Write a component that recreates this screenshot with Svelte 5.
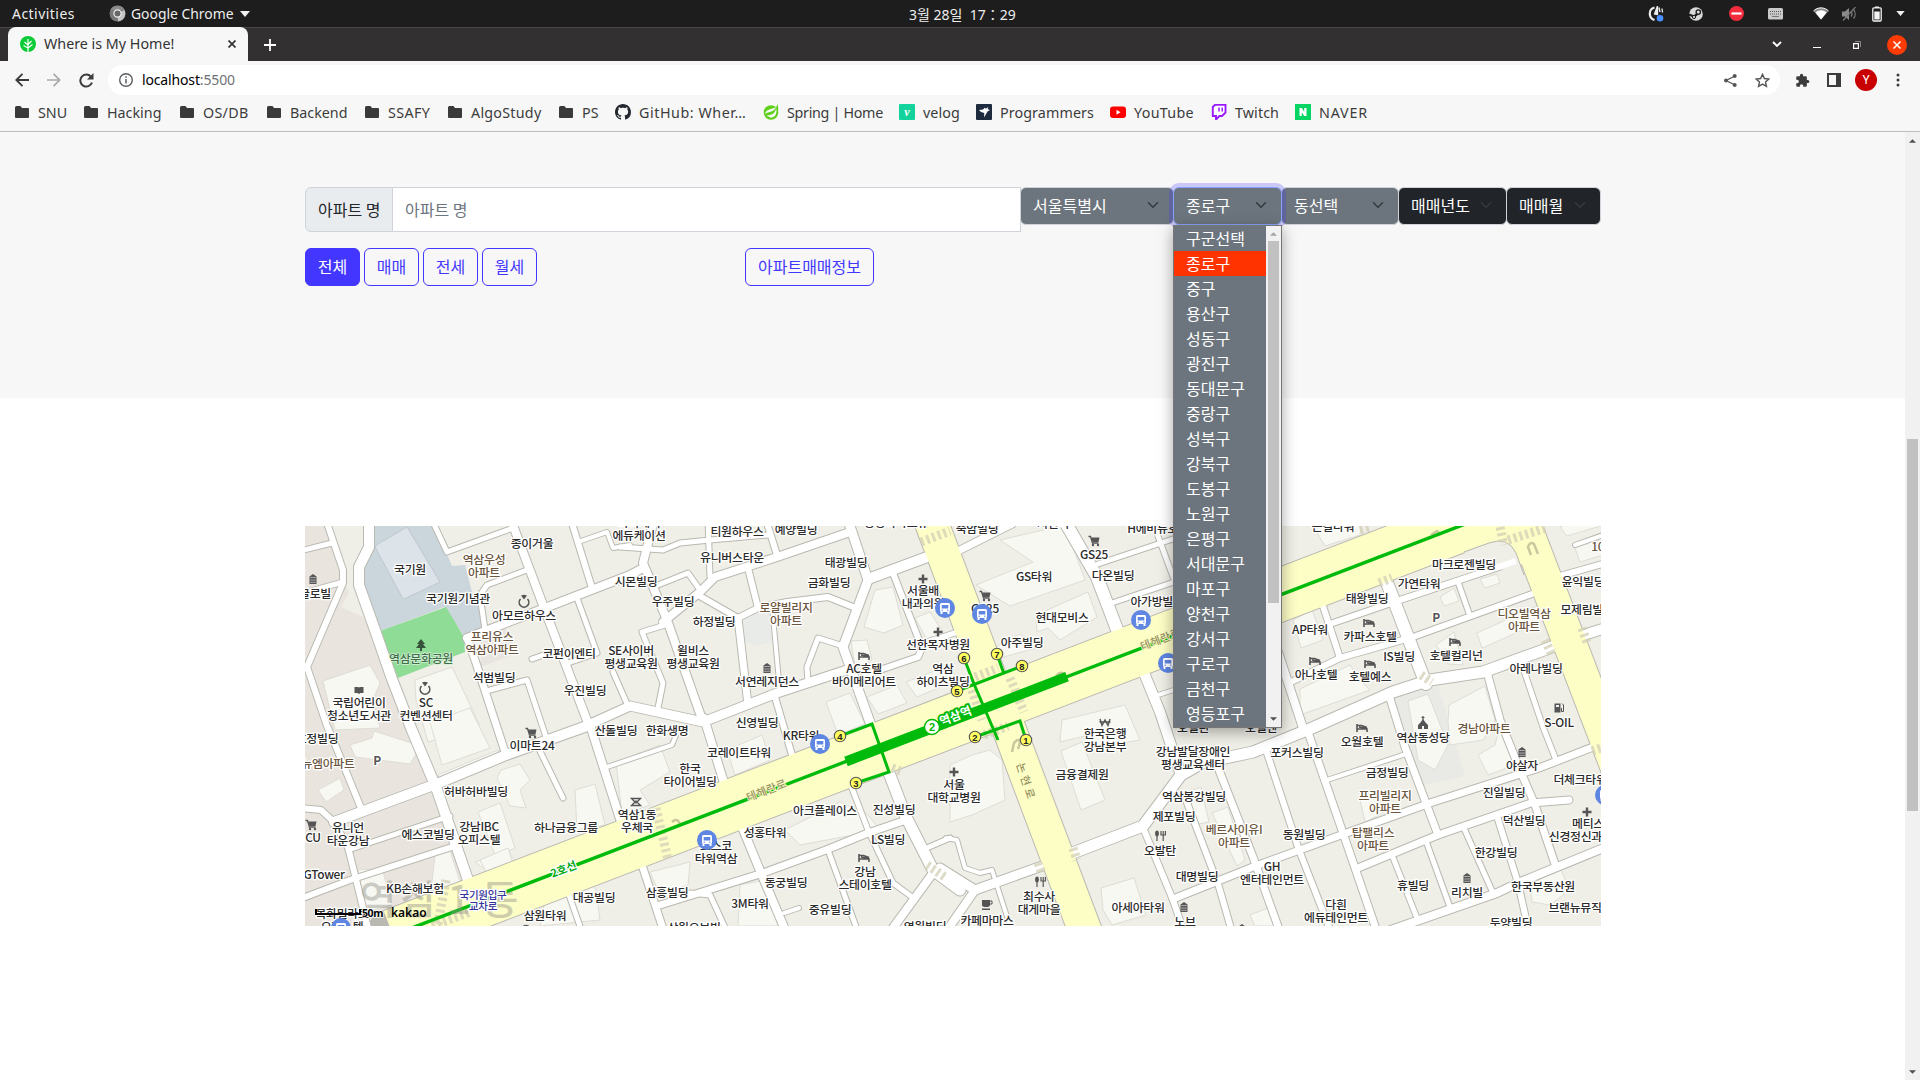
<script>
  const bookmarks = [
    { icon: 'folder', label: 'SNU', w: 69, ls: 0 },
    { icon: 'folder', label: 'Hacking', w: 96, ls: 0 },
    { icon: 'folder', label: 'OS/DB', w: 87, ls: 0.3 },
    { icon: 'folder', label: 'Backend', w: 98, ls: 0 },
    { icon: 'folder', label: 'SSAFY', w: 83, ls: 0.4 },
    { icon: 'folder', label: 'AlgoStudy', w: 111, ls: 0.25 },
    { icon: 'folder', label: 'PS', w: 57, ls: 0 },
    { icon: 'github', label: 'GitHub: Wher…', w: 148, ls: 0.55 },
    { icon: 'spring', label: 'Spring | Home', w: 136, ls: -0.3 },
    { icon: 'velog', label: 'velog', w: 77, ls: 0.1 },
    { icon: 'prog', label: 'Programmers', w: 134, ls: 0.1 },
    { icon: 'youtube', label: 'YouTube', w: 101, ls: 0.3 },
    { icon: 'twitch', label: 'Twitch', w: 84, ls: 0.1 },
    { icon: 'naver', label: 'NAVER', w: 90, ls: 0.8 }
  ];

  const districts = ['구군선택', '종로구', '중구', '용산구', '성동구', '광진구', '동대문구', '중랑구', '성북구', '강북구', '도봉구', '노원구', '은평구', '서대문구', '마포구', '양천구', '강서구', '구로구', '금천구', '영등포구'];

  // White streets: [width, points]
  const streets = [
    [10, '369,520 369,547 359,567 359,585 376,633 392,679 411,728 437,790 468,880'],
    [6, '326,520 343,570 343,583 307,667 327,726 334,742 361,808'],
    [5, '300,551 332,543'], [5, '300,594 343,582'],
    [5, '432,520 447,552 513,528'],
    [8, '511,520 543,605 588,723'],
    [8, '467,638 545,608 630,575 643,568'],
    [7, '467,638 475,660 506,755'],
    [5, '527,570 487,585 480,595 485,630'],
    [6, '571,520 592,588'],
    [4, '578,542 607,532 613,548 630,545'],
    [5, '577,598 597,653 568,663'],
    [5, '532,659 555,651'],
    [5, '490,690 527,680 547,740'],
    [5, '613,672 628,706'],
    [9, '588,725 630,706 703,722 777,693 850,669'],
    [8, '654,520 643,563 667,620 703,722'],
    [5, '620,547 663,550 680,543 710,540 768,535'],
    [8, '663,622 700,592 715,577 777,557 850,532'],
    [5, '708,520 710,577'],
    [6, '766,520 777,555'],
    [9, '848,520 868,580 843,647 872,728'],
    [10, '868,579 930,556'],
    [5, '658,585 688,573 700,590'],
    [6, '698,595 738,618 758,608 748,568'],
    [7, '738,618 748,705'],
    [4, '772,606 780,692'],
    [6, '758,608 787,602 828,597 853,607'],
    [5, '665,625 642,632 663,683 658,708'],
    [5, '840,645 818,638 807,667 808,682'],
    [6, '893,573 922,648 918,657 865,675'],
    [5, '923,643 958,632'],
    [6, '775,697 792,755'],
    [7, '958,551 1012,524'],
    [12, '1064,520 1097,577 1118,632'],
    [5, '1098,564 1173,539'], [5, '1112,603 1180,580'], [5, '1152,520 1178,590'],
    [10, '1142,668 1160,712 1181,775'], [4, '1152,697 1180,688'],
    [11, '1070,854 1143,826 1181,775 1202,763 1253,752 1312,728 1393,692 1430,680 1483,672 1555,646'],
    [10, '1580,636 1606,628'],
    [9, '1042,866 975,890 940,868'], [8, '975,890 946,932'],
    [4, '946,838 957,840 965,868 980,873 992,870 1012,932'],
    [6, '1144,830 1173,900 1184,932'],
    [6, '1186,800 1219,887 1232,932'],
    [7, '1217,765 1253,857 1280,932'],
    [6, '1266,750 1299,850 1331,932'],
    [7, '1308,732 1343,833 1377,932'],
    [7, '1173,899 1253,867 1341,835 1430,803 1539,768 1606,742'],
    [7, '1358,868 1438,835 1531,803 1569,800'],
    [8, '1385,932 1497,893 1518,883 1606,847'],
    [7, '1388,692 1405,747 1438,835'],
    [4, '1327,780 1409,753'],
    [5, '1392,855 1417,918'], [5, '1426,841 1451,910'], [5, '1463,826 1493,893'],
    [6, '1497,816 1518,883 1529,932'],
    [7, '1487,672 1500,720 1520,770 1535,805 1556,867'],
    [5, '1521,662 1543,727 1556,760'],
    [12, '1386,580 1426,684'],
    [6, '1330,624 1400,600 1520,560'],
    [6, '1321,600 1340,658'],
    [6, '1291,682 1340,658 1413,637 1532,594'],
    [8, '1278,652 1303,728'],
    [5, '1458,582 1470,616'],
    [6, '1560,576 1606,563'], [4, '1575,545 1606,534'],
    [10, '334,822 439,783 506,755 590,725'],
    [6, '300,808 321,810 334,822 348,847 369,932'],
    [5, '348,850 450,816'],
    [6, '300,899 350,880 458,845'],
    [8, '590,725 622,825'],
    [4, '607,767 672,745 677,733'],
    [8, '704,718 725,786'],
    [5, '536,743 563,798'],
    [7, '641,862 664,932'], [5, '569,895 582,932'],
    [7, '660,905 763,873 826,850 868,833 906,820'],
    [8, '740,822 761,873 786,932'],
    [5, '690,893 710,895 727,932'],
    [5, '850,783 868,830 893,883 912,897'],
    [5, '828,850 851,913 858,932'],
    [11, '886,765 906,817 933,870 960,890'],
    [8, '933,873 890,932'], [5, '922,850 950,838'], [4, '784,913 799,908']
  ];

  // Building footprints
  const buildings = [
    '374,731 421,746 410,764 355,757 350,745 372,738',
    '323,681 370,665 380,683 373,700 380,728 335,730',
    '415,680 452,667 463,690 480,726 428,742 416,700',
    '430,722 470,708 490,748 442,765', '438,775 498,750 500,762 445,784',
    '875,590 893,587 903,625 884,633 864,627',
    '851,641 867,640 872,660 855,668', '826,702 850,693 865,724 838,735',
    '867,697 897,685 907,703 878,714', '906,682 950,665 957,680 917,697',
    '915,618 930,612 944,634 927,640',
    '1000,540 1065,525 1085,580 1010,606 976,585 1033,562',
    '1036,615 1088,592 1097,617 1060,640 1048,628 1037,632',
    '990,650 1020,634 1036,648 1000,658',
    '1062,720 1125,705 1140,740 1092,748 1085,736 1060,742',
    '1061,751 1082,742 1105,800 1081,810',
    '950,765 972,755 990,750 1002,760 1005,800 972,815 950,822',
    '501,770 520,764 530,780 520,790 526,808 510,806 497,778',
    '478,812 500,803 515,848 496,857', '475,862 508,850 522,875 500,880',
    '616,762 660,745 670,772 640,790 650,805 622,815',
    '575,790 595,784 605,825 577,830',
    '785,830 840,802 868,815 880,830 800,845',
    '650,872 690,862 688,885 660,895', '740,885 765,880 778,926 738,926',
    '1101,888 1134,878 1146,915 1112,925 1103,910',
    '1180,795 1201,787 1209,822 1194,825', '1212,813 1228,807 1245,860 1237,866',
    '1293,620 1312,610 1323,640 1301,648',
    '1440,597 1454,588 1459,601 1444,606', '1480,579 1497,574 1500,583 1485,588',
    '1477,633 1550,600 1557,615 1482,648', '1436,645 1454,632 1463,665 1448,664',
    '1408,701 1428,694 1448,745 1435,770 1418,760',
    '1449,705 1485,686 1495,720 1483,740 1450,745 1448,722',
    '1478,755 1495,745 1500,726 1515,765 1488,775',
    '1575,548 1598,540 1603,555 1580,562', '1560,527 1601,510 1604,525 1567,536',
    '1530,885 1560,868 1570,890 1550,905 1532,902',
    '1300,689 1350,665 1360,680 1370,690 1300,715',
    '1313,526 1355,510 1362,520 1360,535 1325,546',
    '318,790 340,778 344,790 326,802', '358,870 382,868 392,905 366,912',
    '545,900 590,880 596,890 600,920 540,926', '480,860 508,848 515,870 490,880',
    '435,855 450,850 462,888 430,900', '727,750 762,735 770,760 735,775',
    '1250,915 1268,908 1275,926 1255,926', '1360,800 1378,793 1383,813 1365,822'
  ];

  // Place names: [x, y, lines, kind]
  const places = [
    [532, 544, '종이거울'], [484, 560, '역삼우성|아파트', 'apt'], [410, 570, '국기원'], [315, 594, '글로빌'],
    [458, 599, '국기원기념관'], [524, 616, '아모르하우스'], [492, 637, '프리유스|역삼아파트', 'apt'],
    [421, 659, '역삼문화공원', 'park'], [569, 654, '코펀이엔티'], [494, 678, '석범빌딩'], [585, 691, '우진빌딩'],
    [359, 703, '국립어린이|청소년도서관'], [426, 703, 'SC|컨벤션센터'], [639, 523, '와이케이|에듀케이션'],
    [737, 532, '티원하우스'], [796, 530, '예양빌딩'], [732, 558, '유니버스타운'], [846, 563, '태광빌딩'],
    [829, 583, '금화빌딩'], [636, 582, '시몬빌딩'], [673, 602, '우주빌딩'], [714, 622, '하정빌딩'],
    [786, 608, '로얄빌리지|아파트', 'apt'], [631, 651, 'SE사이버|평생교육원'], [693, 651, '윌비스|평생교육원'],
    [767, 682, '서연레지던스'], [864, 669, 'AC호텔|바이메리어트'], [923, 591, '서울배|내과의원'],
    [938, 645, '선한목자병원'], [943, 669, '역삼|하이츠빌딩'], [757, 723, '신영빌딩'], [616, 731, '산돌빌딩'],
    [667, 731, '한화생명'], [896, 523, '광양아파트뷰'], [977, 529, '죽암빌딩'], [1053, 524, '서린더'], [1158, 529, 'H에비뉴호텔'],
    [1094, 555, 'GS25'], [1034, 577, 'GS타워'], [1113, 576, '다온빌딩'], [1062, 618, '현대모비스'],
    [1157, 602, '아가방빌딩'], [985, 609, 'GS25'], [1022, 643, '아주빌딩'], [1333, 527, '큰길타워'],
    [1464, 565, '마크로젠빌딩'], [1419, 584, '가연타워'], [1367, 599, '태왕빌딩'], [1310, 630, 'AP타워'],
    [1370, 637, '카파스호텔'], [1436, 618, 'P', 'bold'], [1524, 614, '디오빌역삼|아파트', 'apt'],
    [1456, 656, '호텔컬리넌'], [1399, 657, 'IS빌딩'], [1370, 677, '호텔예스'], [1316, 675, '아나호텔'],
    [1536, 669, '아레나빌딩'], [1583, 582, '윤익빌딩'], [1587, 610, '모제림빌딩'], [1601, 547, '102', 'apt'],
    [1559, 723, 'S-OIL'], [1484, 729, '경남아파트', 'apt'], [317, 739, '효정빌딩'], [328, 764, '뉴엠아파트', 'apt'],
    [377, 761, 'P', 'bold'], [532, 746, '이마트24'], [739, 753, '코레이트타워'], [801, 736, 'KR타워'],
    [690, 769, '한국|타이어빌딩'], [476, 792, '허바허바빌딩'], [637, 815, '역삼1동|우체국'], [348, 828, '유니언|타운강남'],
    [313, 838, 'CU'], [428, 835, '에스코빌딩'], [479, 827, '강남IBC|오피스텔'], [566, 828, '하나금융그룹'],
    [825, 811, '아크플레이스'], [894, 810, '진성빌딩'], [765, 833, '성홍타워'], [888, 840, 'LS빌딩'],
    [716, 846, '포스코|타워역삼'], [865, 872, '강남|스테이호텔'], [786, 883, '동궁빌딩'], [324, 875, 'GTower'],
    [415, 889, 'KB손해보험'], [594, 898, '대공빌딩'], [667, 893, '삼흥빌딩'], [545, 916, '삼원타워'],
    [750, 904, '3M타워'], [830, 910, '중유빌딩'], [342, 914, '목화밀라트|오피스텔'], [694, 928, '삼원오브빌'], [925, 927, '영원빌딩'],
    [954, 785, '서울|대학교병원'], [1105, 734, '한국은행|강남본부'], [1082, 775, '금융결제원'],
    [1193, 752, '강남발달장애인|평생교육센터'], [1194, 797, '역삼봉강빌딩'], [1174, 817, '제포빌딩'],
    [1160, 851, '오발탄'], [1234, 830, '베르사이유I|아파트', 'apt'], [1304, 835, '동원빌딩'], [1297, 753, '포커스빌딩'],
    [1193, 728, '호텔린'], [1261, 728, '호텔엔'], [1362, 742, '오월호텔'], [1423, 738, '역삼동성당'],
    [1387, 773, '금정빌딩'], [1385, 796, '프리빌리지|아파트', 'apt'], [1373, 833, '탑팰리스|아파트', 'apt'],
    [1522, 766, '야살자'], [1580, 780, '더체크타워'], [1504, 793, '진일빌딩'], [1524, 821, '덕산빌딩'],
    [1588, 824, '메티스'], [1586, 837, '신경정신과의원'], [1496, 853, '한강빌딩'], [1413, 886, '휴빌딩'],
    [1467, 893, '리치빌'], [1543, 887, '한국부동산원'], [1575, 908, '브랜뉴뮤직'], [1511, 923, '두양빌딩'],
    [1336, 905, '다흰|에듀테인먼트'], [1272, 867, 'GH|엔터테인먼트'], [1197, 877, '대명빌딩'], [1185, 922, '노브'],
    [1138, 908, '아세아타워'], [1039, 897, '최수사|대게마을'], [987, 921, '카페마마스']
  ];

  // Category glyphs: [symbol, x, y]
  const glyphs = [
    ['bldg', 313, 579], ['bldg', 767, 668], ['bldg', 1522, 752], ['bldg', 1467, 878], ['bldg', 1184, 907],
    ['ring', 524, 601], ['ring', 425, 688], ['tree', 421, 645], ['book', 359, 690],
    ['bed', 864, 656], ['bed', 1369, 623], ['bed', 1315, 661], ['bed', 1370, 664], ['bed', 1455, 642], ['bed', 1362, 728], ['bed', 864, 858],
    ['plus', 923, 579], ['plus', 938, 632], ['plus', 954, 772], ['plus', 1587, 812],
    ['cart', 1094, 541], ['cart', 985, 596], ['cart', 531, 733], ['cart', 311, 825],
    ['post', 636, 802], ['won', 1105, 722], ['church', 1423, 723], ['fuel', 1559, 708],
    ['food', 1160, 836], ['food', 1040, 882], ['cup', 987, 905], ['ring', 526, 931], ['bldg', 1242, 929]
  ];

  const buses = [[945, 608], [982, 614], [1141, 620], [1168, 663], [820, 744], [707, 840], [341, 928], [1605, 795]];
  const exits = [[6, 964, 658], [7, 997, 654], [8, 1022, 666], [5, 957, 691], [4, 840, 736], [3, 856, 783], [2, 975, 737], [1, 1026, 740]];
  const crossings = [
    '921,542 950,531', '975,677 998,668', '972,690 982,720', '1010,678 1024,712', '984,735 1008,726',
    '656,808 668,860', '446,880 438,924', '432,926 470,912', '1379,583 1392,578', '1421,675 1432,682',
    '1500,527 1504,545', '1508,540 1546,528', '1545,640 1552,655', '1582,628 1588,645', '1073,848 1077,860',
    '1038,863 1042,874', '927,865 945,877', '892,768 903,772', '1592,751 1601,748', '1360,530 1370,527'
  ];
</script>

{#snippet chevron(cls)}
  <svg class="chev {cls}" width="16" height="12" viewBox="0 0 16 16"><path d="m2 5 6 6 6-6" fill="none" stroke-width="2" stroke-linecap="round" stroke-linejoin="round" /></svg>
{/snippet}

<div class="screen">
  <header class="gnome">
    <span class="act">Activities</span>
    <svg class="chromium" width="17" height="17" viewBox="0 0 17 17">
      <circle cx="8.5" cy="8.5" r="8" fill="#777" /><path d="M8.500 8.500 15.500 5A8 8 0 0 1 9 16.500z" fill="#c4c4c4" /><path d="M1.500 5A8 8 0 0 1 15.500 5H8.500z" fill="#8b8b8b" />
      <circle cx="8.500" cy="8.500" r="3.600" fill="#666" stroke="#eee" stroke-width="1.200" />
    </svg>
    <span class="app">Google Chrome</span>
    <svg class="caret" width="10" height="6" viewBox="0 0 10 6"><path d="M0 0h10L5 6z" fill="#f2f2f2" /></svg>
    <span class="clock">3월 28일&nbsp; 17：29</span>
    <div class="status">
      <span class="s40"><svg width="16" height="16" viewBox="0 0 16 16"><path d="M6.500 1.500a6.500 6.500 0 0 0 0 12.500" fill="none" stroke="#eee" stroke-width="2.200" /><path d="M9.500 0 6.500 8l3 .5zM11 1.500l1 4.500M14 2.500l.5 4" fill="#eee" stroke="#eee" stroke-width="1.300" /><circle cx="12" cy="12.300" r="3.300" fill="#4a90ff" /></svg></span>
      <span class="s40"><svg width="14" height="14" viewBox="0 0 14 14"><circle cx="7" cy="7" r="6.800" fill="#d8d8d8" /><path d="M0 7.500 5 9.500 9 6.500" fill="none" stroke="#1d1d1d" stroke-width="2.200" /><circle cx="9.300" cy="5" r="2.200" fill="#d8d8d8" stroke="#1d1d1d" stroke-width="1.300" /><circle cx="5" cy="10" r="1.600" fill="#d8d8d8" stroke="#1d1d1d" /></svg></span>
      <span class="s40"><svg width="15" height="15" viewBox="0 0 15 15"><circle cx="7.500" cy="7.500" r="7.500" fill="#f22c3d" /><path d="M2.500 7.500h10" stroke="#fff" stroke-width="2.200" /></svg></span>
      <span class="s40 kb"><svg width="15" height="12" viewBox="0 0 15 12"><rect width="15" height="11.500" rx="1.500" fill="#c9c9c9" /><path d="M2 3.500h11M2 6h11" stroke="#555" stroke-dasharray="1 1" /><path d="M4 8.500h7" stroke="#777" /></svg></span>
      <span class="s28 first"><svg width="16" height="13" viewBox="0 0 16 13"><path d="M.5 4C4.500-.2 11.500-.2 15.500 4L8 12.800z" fill="#8a8a8a" /><path d="M.5 4C4.500-.2 11.500-.2 15.500 4" fill="none" stroke="#f2f2f2" /><path d="M2.500 5.500c3-3 8-3 11 0L8 12.500z" fill="#fff" /></svg></span>
      <span class="s28"><svg width="15" height="14" viewBox="0 0 15 14"><path d="M0 4.500h3L7 1v12L3 9.500H0z" fill="#8a8a8a" /><path d="M9 4.500a4 4 0 0 1 0 5M11.500 2.500a7 7 0 0 1 0 9M1 13.500 13.500 0" fill="none" stroke="#777" stroke-width="1.300" /></svg></span>
      <span class="s28"><svg width="10" height="16" viewBox="0 0 10 16"><path d="M3 .5h4v1.500H3z" fill="#f2f2f2" /><rect x=".8" y="1.800" width="8.400" height="13.200" rx="1" fill="none" stroke="#f2f2f2" stroke-width="1.300" /><path d="M2.300 5.500h5.400v8H2.300z" fill="#f2f2f2" /></svg></span>
      <span class="s18"><svg width="9" height="5" viewBox="0 0 10 6"><path d="M0 0h10L5 6z" fill="#f2f2f2" /></svg></span>
    </div>
  </header>

  <div class="tabs">
    <div class="tab">
      <svg width="16" height="16" viewBox="0 0 16 16"><circle cx="8" cy="8" r="8" fill="#0ccb36" /><path d="M8 3v13M8 9 4.500 6M8 12 3.500 9.500M8 8.500 11.500 5M8 12l4.500-3.500" stroke="#fff" stroke-width="1.200" fill="none" /></svg>
      <span>Where is My Home!</span>
      <svg class="x" width="8" height="8" viewBox="0 0 8 8"><path d="m.5.5 7 7m0-7-7 7" stroke="#333" stroke-width="1.700" /></svg>
    </div>
    <svg class="plus" width="12" height="12" viewBox="0 0 12 12"><path d="M6 0v12M0 6h12" stroke="#fff" stroke-width="1.800" /></svg>
    <div class="winctl">
      <span><svg width="10" height="7" viewBox="0 0 10 7"><path d="m1 1 4 4 4-4" fill="none" stroke="#fff" stroke-width="1.900" /></svg></span>
      <span><svg class="min" width="8" height="6" viewBox="0 0 8 6"><path d="M0 5.500h8" stroke="#fff" /></svg></span>
      <span><svg width="8" height="8" viewBox="0 0 8 8"><path d="M.6 2.600h4.800v4.800H.6z" fill="none" stroke="#fff" stroke-width="1.200" /><path d="M2 .5h5.500V6" fill="none" stroke="#8b8889" /></svg></span>
      <span><i class="close"><svg width="8" height="8" viewBox="0 0 8 8"><path d="m.5.5 7 7m0-7-7 7" stroke="#fff" stroke-width="1.500" /></svg></i></span>
    </div>
  </div>

  <div class="toolbar">
    <span class="tb"><svg width="14" height="14" viewBox="0 0 14 14"><path d="M14 7H1.500M7.500.8 1.300 7l6.200 6.200" fill="none" stroke="#3c3c3c" stroke-width="1.900" /></svg></span>
    <span class="tb"><svg width="14" height="14" viewBox="0 0 14 14"><path d="M0 7h12.500M6.500.8 12.700 7l-6.200 6.200" fill="none" stroke="#a9a9a9" stroke-width="1.700" /></svg></span>
    <span class="tb"><svg width="15" height="15" viewBox="0 0 15 15"><path d="M13 9.500A6 6 0 1 1 11.800 3.500" fill="none" stroke="#3c3c3c" stroke-width="2" /><path d="M14.500 0v6.500H8z" fill="#3c3c3c" /></svg></span>
    <div class="omni">
      <svg width="14" height="14" viewBox="0 0 14 14"><circle cx="7" cy="7" r="6.300" fill="none" stroke="#5a5d61" stroke-width="1.400" /><path d="M7 6v4.500M7 3.200v1.500" stroke="#5a5d61" stroke-width="1.500" /></svg>
      <span class="url">localhost<em>:5500</em></span>
      <span class="tb"><svg width="13" height="13" viewBox="0 0 13 13"><path d="M11 2 2 6.500l9 4.500" fill="none" stroke="#555" stroke-width="1.300" /><circle cx="10.700" cy="2" r="2" fill="#555" /><circle cx="2" cy="6.500" r="2" fill="#555" /><circle cx="10.700" cy="11" r="2" fill="#555" /></svg></span>
      <span class="tb"><svg width="15" height="15" viewBox="0 0 16 16"><path d="m8 1.500 2 4.400 4.800.5-3.600 3.200 1 4.700L8 11.900l-4.200 2.400 1-4.700L1.200 6.400 6 5.900z" fill="none" stroke="#555" stroke-width="1.500" /></svg></span>
    </div>
    <span class="tb"><svg width="15" height="15" viewBox="0 0 24 24"><path d="M20.500 11H19V7a2 2 0 0 0-2-2h-4V3.500a2.500 2.500 0 0 0-5 0V5H4a2 2 0 0 0-2 2v3.800h1.500a2.700 2.700 0 0 1 0 5.400H2V20a2 2 0 0 0 2 2h3.800v-1.500a2.700 2.700 0 0 1 5.400 0V22H17a2 2 0 0 0 2-2v-4h1.500a2.500 2.500 0 0 0 0-5z" fill="#3c3c3c" /></svg></span>
    <span class="tb"><svg width="14" height="14" viewBox="0 0 14 14"><path d="M1 1h12v12H1z" fill="none" stroke="#3c3c3c" stroke-width="2" /><path d="M9 1h4v12H9z" fill="#3c3c3c" /></svg></span>
    <span class="tb"><i class="avatar">Y</i></span>
    <span class="tb"><svg width="4" height="14" viewBox="0 0 4 14"><circle cx="2" cy="2" r="1.500" fill="#3c3c3c" /><circle cx="2" cy="7" r="1.500" fill="#3c3c3c" /><circle cx="2" cy="12" r="1.500" fill="#3c3c3c" /></svg></span>
  </div>

  <nav class="marks">
    {#each bookmarks as b}
      <span class="mark" style="width:{b.w}px;letter-spacing:{b.ls}px">
        <svg width="16" height="16" viewBox="0 0 16 16">
          {#if b.icon === 'folder'}
            <path d="M1 3.500a1.500 1.500 0 0 1 1.500-1.500h4L8 4h6a1 1 0 0 1 1 1v8a1 1 0 0 1-1 1H2a1 1 0 0 1-1-1z" fill="#3a3a3a" />
          {:else if b.icon === 'github'}
            <path fill="#24292f" d="M8 0C3.580 0 0 3.580 0 8c0 3.540 2.290 6.530 5.470 7.590.4.070.55-.17.55-.38 0-.19-.01-.82-.01-1.490-2.010.37-2.530-.49-2.690-.94-.09-.23-.48-.94-.82-1.130-.28-.15-.68-.52-.01-.53.63-.01 1.080.58 1.230.82.72 1.210 1.870.87 2.330.66.070-.52.280-.87.510-1.070-1.780-.2-3.640-.89-3.640-3.950 0-.87.310-1.590.820-2.150-.08-.2-.36-1.020.08-2.120 0 0 .67-.21 2.200.82.640-.18 1.320-.27 2-.27s1.360.09 2 .27c1.530-1.040 2.200-.82 2.200-.82.440 1.100.160 1.920.080 2.120.510.560.820 1.270.820 2.150 0 3.070-1.870 3.750-3.650 3.950.290.250.540.730.540 1.480 0 1.070-.01 1.930-.01 2.200 0 .21.150.46.550.38A8.010 8.010 0 0 0 16 8c0-4.420-3.580-8-8-8z" />
          {:else if b.icon === 'spring'}
            <circle cx="8" cy="8.500" r="7.300" fill="#5fd01c" /><path d="M3.500 11.500c5-.2 9-2 9.500-7.500 1.500 5-.5 9-5 9.800z" fill="#f7f7f7" /><path d="M14.500 0c.8 2.500 1 5 .3 7.500L13 4z" fill="#5fd01c" /><path d="M2 10C3 4.500 9 6 12.800 3 11.500 8.500 6 7 2 10z" fill="#f7f7f7" />
          {:else if b.icon === 'velog'}
            <rect width="16" height="16" rx="1" fill="#12d39b" /><text x="8" y="12" class="ic velog">v</text>
          {:else if b.icon === 'prog'}
            <rect width="16" height="16" rx="1" fill="#1e2a3e" /><path d="M3 6l4-.5L9 3.500l.5 1.200L12.500 3l-1 2L14 6l-2.500 1.500L8 13.500l.3-4.500L5 8z" fill="#fff" />
          {:else if b.icon === 'youtube'}
            <rect y="2.500" width="16" height="11.500" rx="3" fill="#f00" /><path d="M6.500 5.800v5l4-2.500z" fill="#fff" />
          {:else if b.icon === 'twitch'}
            <path d="M4 .8h10.500v7.700L11 12H8.500l-3.500 3.500V12H1.800V3z" fill="#fff" stroke="#9a1aff" stroke-width="1.900" /><path d="M8 3.500v4M11.200 3.500v4" stroke="#9a1aff" stroke-width="1.500" />
          {:else}
            <rect width="16" height="16" fill="#06d564" /><path d="M4.500 12V4h2.300l2.400 3.800V4h2.300v8H9.200L6.800 8.200V12z" fill="#fff" />
          {/if}
        </svg>
        <span>{b.label}</span>
      </span>
    {/each}
  </nav>

  <main class="view">
    <div class="page">
      <section class="search">
        <div class="row">
          <span class="tag">아파트 명</span>
          <span class="field">아파트 명</span>
          <span class="sel a">서울특별시{@render chevron('g')}</span>
          <span class="sel b focus">종로구{@render chevron('g')}
            <span class="menu">
              <span class="opts">
                {#each districts as d, i}
                  <span class="opt" class:on={i === 1}>{d}</span>
                {/each}
              </span>
              <span class="mbar">
                <svg width="7" height="4" viewBox="0 0 8 4"><path d="M0 4 4 0l4 4z" fill="#a3a3a3" /></svg>
                <i></i>
                <svg width="7" height="4" viewBox="0 0 8 4"><path d="M0 0h8L4 4z" fill="#505050" /></svg>
              </span>
            </span>
          </span>
          <span class="sel c">동선택{@render chevron('g')}</span>
          <span class="sel d dark">매매년도{@render chevron('k')}</span>
          <span class="sel e dark">매매월{@render chevron('k')}</span>
        </div>
        <div class="btns">
          <button class="on">전체</button><button>매매</button><button>전세</button><button>월세</button>
          <button class="info">아파트매매정보</button>
        </div>
      </section>

      <section class="mapwrap">
        <svg class="map" width="1296" height="400" viewBox="305 526 1296 400">
          <defs>
            <g id="bldg"><path d="M-3.500 5V-2.500L0-5l3.500 2.500V5z" fill="#555" /><path d="M-2.500-1.500h5M-2.500 1h5M-2.500 3.300h5" stroke="#eee" stroke-width=".9" stroke-dasharray="1.200 .7" /></g>
            <g id="ring"><path d="M-3.500-2a4.800 4.800 0 1 0 7 0" fill="none" stroke="#555" stroke-width="1.600" /><path d="M-3-5.500 0-6.200 3-5.500 0-1.500z" fill="#555" /></g>
            <g id="tree"><path d="M0-6 4-1H2l3 4H1v3h-2V3h-4l3-4h-2z" fill="#35543a" /></g>
            <g id="book"><path d="M-4.500-3h4L0-2l.5-1h4v6h-3L0 4-1.500 3h-3z" fill="#555" /></g>
            <g id="bed"><path d="M-5-4v8M-5-2.500h4.500l5.500 2M-5 1h10v3M-3-1l8 1.500" stroke="#555" stroke-width="1.600" fill="none" /></g>
            <g id="plus"><path d="M0-4.500v9M-4.500 0h9" stroke="#555" stroke-width="2.400" /></g>
            <g id="cart"><path d="M-5.500-4.500h2l2 6.500h6" stroke="#555" fill="none" stroke-width="1.300" /><path d="M-3-3.500h8.500L4.500 1h-6z" fill="#555" /><circle cx="-1" cy="4" r="1.200" fill="#555" /><circle cx="4" cy="4" r="1.200" fill="#555" /></g>
            <g id="post"><path d="M-4.500-3.500h9L0 1zM-4.500 3.500h9L0-1z" stroke="#555" stroke-width="1.400" fill="none" /></g>
            <g id="won"><path d="m-5-3 2 6.500L0-2l3 5.500L5-3M-5.500 0h11" stroke="#555" stroke-width="1.400" fill="none" /></g>
            <g id="church"><path d="M0-7v4M-1.500-5.500h3" stroke="#555" stroke-width="1.200" /><path d="M0-4 2.500-.5 5 2v4H1V3h-2v3h-4V2l2.500-2.500z" fill="#555" /></g>
            <g id="fuel"><path d="M-4.500-4.500h6v9h-6z" fill="#555" /><path d="M-3-3h3v2h-3z" fill="#eee" /><path d="M2.500 0v3.500H4.500V-3L3-4.500" stroke="#555" fill="none" /></g>
            <g id="food"><ellipse cx="-3" cy="-2.500" rx="1.900" ry="3" fill="#555" /><path d="M-3-1v6M3.200 0v5M1-5v4h4.400v-4M3.200-5v5" stroke="#555" stroke-width="1.200" fill="none" /></g>
            <g id="cup"><path d="M-5-5h8V0Q3 2-1 2T-5 0zM-5 3.500h8V5h-8z" fill="#555" /><path d="M3-4h2v3H3" fill="none" stroke="#555" /></g>
            <g id="bus"><circle r="10" fill="#5f86e2" /><rect x="-5" y="-5" width="10" height="9" rx="1.500" fill="#fff" /><path d="M-3.300-3h6.600v3.500h-6.600z" fill="#5f86e2" /><path d="M-3.500 4v2M3.500 4v2" stroke="#fff" stroke-width="2" /><path d="M-3.500 2.200h1.500M2 2.200h1.500" stroke="#5f86e2" /></g>
          </defs>
          <rect x="305" y="526" width="1296" height="400" fill="#f0efe7" />
          <path d="M305 526h22l16 55 20 36 53 105 50 160-80 44H305z" fill="#e9e5de" />
          <path d="M341 607 363 617 331 526h38l-10 50z" fill="#f0efe7" />
          <path d="M369 526h66l17 40 13-1 7 27 10 21v15l-17 9-21-30-64 24-20-44v-18l10-18z" fill="#cbd5dc" />
          <path d="m407 527 33 55-36 17-2-2-27-50 3-3z" fill="#dce4e9" stroke="#c0c8d0" />
          <path d="m446 607 18 30 1 15-67 26-18-47z" fill="#8fdc96" />
          <path d="m480 640 25-12 13 25-37 14z" fill="#e8e5e0" />
          <path d="m744 614 24-10 4 38-16 4-11-4z" fill="#e9ebe8" />
          <path d="m1393 696 45-10 27 90-45 10z" fill="#e9e9e5" />
          <g class="blds">{#each buildings as p}<polygon points={p} />{/each}</g>
          <g class="case">{#each streets as s}<polyline points={s[1]} stroke-width={s[0] + 2} />{/each}</g>
          <g class="case">
            <path d="M929 516 1087 936M1521 516 1645 840" stroke-width="35" />
            <path d="M393 935.200 1500 510.700" stroke-width="54" />
          </g>
          <g class="fill">{#each streets as s}<polyline points={s[1]} stroke-width={s[0]} />{/each}</g>
          <g class="main">
            <path d="M929 516 1087 936M1521 516 1645 840" stroke-width="33" />
            <path d="M393 935.200 1500 510.700" stroke-width="52" />
            <path d="M1440 526h105l-20 40z" stroke="none" fill="#fdfdc6" />
          </g>
          <path d="M1489 543q19-7 27 10l8 22-40-10-20-13z" fill="#f0efe7" />
          <path d="M1464 552 1489 543q19-7 27 10l8 22" fill="none" stroke="#b8b8b0" />
          <path d="M1400 600 1516 561" fill="none" stroke="#fff" stroke-width="6" />
          <g class="zebra">{#each crossings as c}<polyline points={c} />{/each}</g>
          <g class="uturn">
            <path d="m1012 752 2-9q5-6 6 0l-2 6M1531 555l-3-8q2-6 6-3l4 10M1431 535l6-4 4 4M672 822q5-5 8 2M1056 676q5-6 9-1" />
          </g>

          <g class="metro">
            <path d="M393 935.200 1500 510.700" stroke-width="3.400" />
            <path d="M846 761.500 1067 676.700" stroke-width="10" />
            <path d="M964 658 974 684 998 740M957 691 1022 666M997 654 1004 674M840 736 872 724 889 772 856 783M975 737 1020 721 1026 740" stroke-width="3" />
          </g>
          <g class="area"><text x="378" y="914">역</text><text x="419" y="914">삼</text><text x="459" y="914">1</text><text x="500" y="914">동</text></g>
          <g class="roadname">
            <text transform="translate(768 794) rotate(-21)">테헤란로</text>
            <text transform="translate(1162 643) rotate(-21)">테헤란로</text>
            <text transform="translate(1022 782) rotate(72)">논 현 로</text>
          </g>
          <text class="line2" transform="translate(565 873) rotate(-21)">2호선</text>
          <g transform="translate(932 727)">
            <circle r="7.500" fill="#fff" stroke="#00b900" stroke-width="1.300" /><text class="stn" y="4" fill="#00b900">2</text>
          </g>
          <text class="station" transform="translate(957 720) rotate(-21)">역삼역</text>

          {#each glyphs as g}<use href="#{g[0]}" x={g[1]} y={g[2]} />{/each}
          {#each places as p}
            <text class="pl {p[3] ?? ''}" x={p[0]} y={p[1] + 4}>
              {#each p[2].split('|') as line, i}<tspan x={p[0]} dy={i * 13}>{line}</tspan>{/each}
            </text>
          {/each}
          <text class="pl cross" x="483" y="899">국기원입구<tspan x="483" dy="11">교차로</tspan></text>
          {#each buses as b}<use href="#bus" x={b[0]} y={b[1]} />{/each}
          {#each exits as e}
            <circle cx={e[1]} cy={e[2]} r="5.700" fill="#ffff5e" stroke="#555" stroke-width="1.100" /><text class="exit" x={e[1]} y={e[2] + 3.500}>{e[0]}</text>
          {/each}
          <path d="M316 909v5h44v-5" fill="none" stroke="#000" stroke-width="2" />
          <text class="scale" x="362" y="917">50m</text>
          <text class="kakao" x="391" y="917">kakao</text>
        </svg>
      </section>
    </div>
    <aside class="bar">
      <svg width="7" height="4" viewBox="0 0 8 4"><path d="M0 4 4 0l4 4z" fill="#505050" /></svg>
      <i></i>
      <svg width="7" height="4" viewBox="0 0 8 4"><path d="M0 0h8L4 4z" fill="#505050" /></svg>
    </aside>
  </main>
</div>

<style>
  :global(body) { margin: 0; overflow: hidden; }
  * { box-sizing: border-box; }
  svg { display: block; flex: none; }
  .screen { width: 1920px; height: 1080px; display: flex; flex-direction: column; background: #fff; font-family: "Noto Sans", "Noto Sans CJK KR", sans-serif; font-size: 14.3px; color: #3c3c3c; white-space: nowrap; overflow: hidden; }

  .gnome { height: 27px; background: #1d1d1d; color: #eee; display: grid; grid-template-columns: 97px 22px 109px 669px auto 1fr; align-items: center; padding-left: 12px; font-size: 13.9px; }
  .act { letter-spacing: .5px; }
  .clock { font-size: 14px; }
  .status { display: flex; align-items: center; justify-content: flex-end; padding-right: 11px; }
  .status span { display: flex; justify-content: center; }
  .s40 { width: 40px; }
  .kb { padding-right: 1px; }
  .s28 { width: 28px; }
  .first { margin-left: 11px; }
  .s18 { width: 18px; }

  .tabs { height: 34px; background: #333031; border-top: 1px solid #484546; display: flex; align-items: center; padding-left: 8px; }
  .tab { width: 240px; height: 34px; margin-top: -1px; background: #f7f7f7; border-radius: 8px 8px 0 0; display: flex; align-items: center; gap: 8px; padding: 0 12px 1px; color: #333; }
  .x { margin-left: auto; }
  .plus { margin-left: 16px; }
  .winctl { margin-left: auto; padding-right: 3px; display: flex; }
  .winctl span { width: 40px; display: flex; align-items: center; justify-content: center; }
  .min { margin-top: 1px; }
  .close { width: 20px; height: 20px; border-radius: 50%; background: #ff3b05; display: flex; align-items: center; justify-content: center; }

  .toolbar { height: 38px; background: #f7f7f7; display: flex; align-items: center; padding: 0 6px; }
  .tb { width: 32px; height: 30px; display: flex; align-items: center; justify-content: center; }
  .omni { flex: 1; height: 30px; margin: 0 6px; background: #fff; border-radius: 15px; display: flex; align-items: center; padding: 0 2px 0 11px; }
  .url { flex: 1; margin: -1px 0 0 9px; color: #000; font-size: 14px; letter-spacing: -.15px; }
  .url em { font-style: normal; color: #6e7175; }
  .avatar { width: 22px; height: 22px; border-radius: 50%; background: #c90000; color: #fff; font: normal 12px/22px Roboto, sans-serif; text-align: center; }

  .marks { height: 33px; background: #f7f7f7; border-bottom: 1px solid #bdbdbd; display: flex; padding: 0 0 6px 14px; align-items: center; }
  .mark { display: flex; align-items: center; gap: 8px; flex: none; }
  .ic { font: italic bold 12px "Liberation Serif", serif; fill: #fff; text-anchor: middle; }

  .view { flex: 1; display: flex; }
  .page { flex: 1; font: 16px/24px "Noto Sans CJK KR", sans-serif; }
  .search { height: 266px; background: #f7f7f7; padding: 55px 304px 0 305px; }
  .row { display: flex; align-items: flex-start; height: 45px; }
  .tag { width: 88px; height: 45px; background: #e9ecef; border: 1px solid #ced4da; border-radius: 6px 0 0 6px; padding: 9px 12px; color: #212529; }
  .field { width: 628px; height: 45px; background: #fff; border: 1px solid #ced4da; border-left: 0; padding: 9px 12px; color: #6c757d; }
  .sel { height: 38px; border: 1px solid #ced4da; border-radius: 6px; background: #6c757d; color: #fff; padding: 5px 12px 7px; line-height: 24px; position: relative; display: flex; align-items: center; justify-content: space-between; margin-left: -1px; }
  .a { width: 154px; }
  .b { width: 109px; }
  .c { width: 118px; }
  .d { width: 109px; }
  .e { width: 95px; }
  .dark { background: #212529; }
  .focus { border-color: #86a4ff; box-shadow: 0 0 0 4px rgba(67, 54, 255, .25); z-index: 2; }
  .chev { stroke: #343a40; }
  .menu { position: absolute; left: -1px; top: 37px; width: 109px; height: 503px; border: 1px solid #767676; background: #6c757d; display: flex; box-shadow: 0 4px 14px rgba(0, 0, 0, .35); }
  .opts { flex: 1; display: flex; flex-direction: column; }
  .opt { height: 25px; line-height: 25px; padding-left: 12px; }
  .opt.on { background: #ff3300; }
  .mbar { width: 15px; background: #f1f1f1; display: flex; flex-direction: column; align-items: center; padding: 6px 0; }
  .mbar i { width: 11px; height: 362px; background: #c1c1c1; margin: 5px 0 auto; }

  .btns { display: flex; gap: 4px; margin-top: 16px; }
  button { width: 55px; height: 38px; padding: 0 0 3px; border: 1px solid #4336ff; border-radius: 6px; background: none; color: #4336ff; font: inherit; }
  button.on { background: #4336ff; color: #fff; }
  button.info { width: 129px; margin-left: 204px; }

  .mapwrap { padding: 128px 304px 0 305px; }
  .map { overflow: hidden; }
  .blds { fill: #f8f8f3; stroke: #deddd5; }
  .case { fill: none; stroke: #b9b9b2; stroke-linejoin: round; stroke-linecap: round; }
  .fill { fill: none; stroke: #fff; stroke-linejoin: round; stroke-linecap: round; }
  .main { fill: none; stroke: #fdfdc6; }
  .zebra { fill: none; stroke: #d3d0b6; stroke-width: 9; stroke-dasharray: 3 3; opacity: .75; }
  .uturn { fill: none; stroke: #c9c79c; stroke-width: 2.500; }
  .metro { fill: none; stroke: #00bb0c; }
  .pl { font: 500 11.9px "Noto Sans CJK KR", sans-serif; letter-spacing: -.3px; text-anchor: middle; fill: #2b2b2b; stroke: #fff; stroke-width: 2.500px; stroke-linejoin: round; paint-order: stroke; }
  .apt { fill: #6b5640; }
  .park { fill: #3f6e4a; stroke: #d5f0d6; stroke-width: 1.500px; }
  .bold { font-weight: 700; fill: #555; }
  .cross { font-size: 10.500px; fill: #333399; }
  .area { font: 500 40px "Noto Sans CJK KR", sans-serif; text-anchor: middle; fill: #8f8f86; opacity: .42; }
  .roadname { font: 500 11px "Noto Sans CJK KR", sans-serif; letter-spacing: .4px; text-anchor: middle; fill: #96925f; stroke: #fdfdc6; stroke-width: 1.500px; paint-order: stroke; }
  .line2 { font: 700 11px "Noto Sans CJK KR", sans-serif; text-anchor: middle; fill: #00a80c; stroke: #fff; stroke-width: 2.500px; paint-order: stroke; }
  .station { font: 700 12px "Noto Sans CJK KR", sans-serif; text-anchor: middle; fill: #fff; stroke: #00b90c; stroke-width: 4px; stroke-linejoin: round; paint-order: stroke; }
  .stn { font: bold 11px "Liberation Sans", sans-serif; text-anchor: middle; }
  .exit { font: bold 9.500px "Liberation Sans", sans-serif; text-anchor: middle; fill: #222; }
  .scale { font: bold 10.500px "Noto Sans", sans-serif; fill: #000; stroke: #fff; stroke-width: 1.500px; paint-order: stroke; letter-spacing: -.4px; }
  .kakao { font: 600 12px "Noto Sans", sans-serif; fill: #000; }

  .bar { width: 15px; background: #f1f1f1; display: flex; flex-direction: column; align-items: center; padding: 7px 0 6px; }
  .bar i { width: 11px; height: 372px; margin: 296px 0 auto; background: #c1c1c1; }
</style>
